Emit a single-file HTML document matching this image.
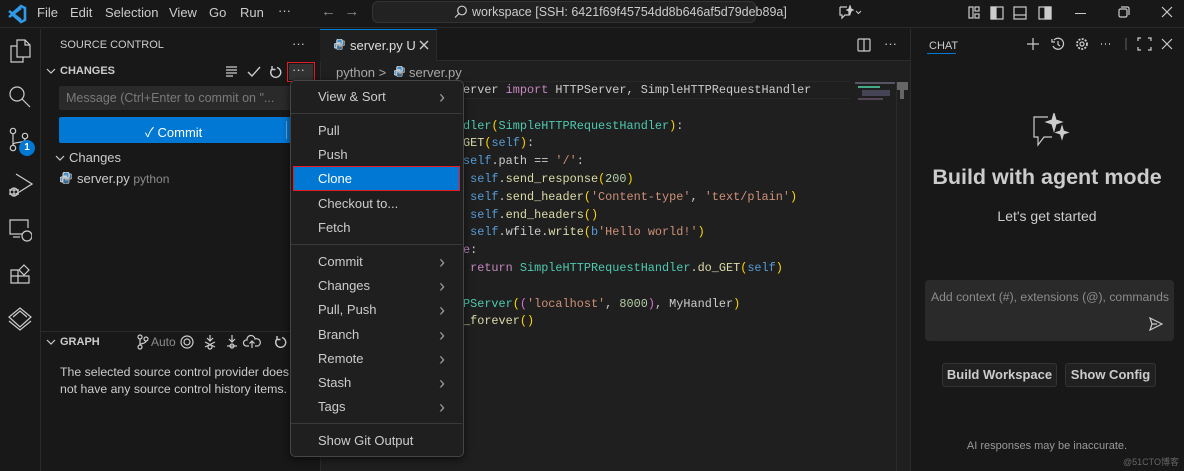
<!DOCTYPE html>
<html><head><meta charset="utf-8">
<style>
*{box-sizing:border-box;margin:0;padding:0}
body{width:1184px;height:471px;overflow:hidden;background:#181818;font-family:"Liberation Sans","Noto Sans CJK SC",sans-serif;color:#ccc;font-size:13px;position:relative}
.a{position:absolute}
.mono{font-family:"Liberation Mono",monospace;font-size:11.85px;white-space:pre}
svg{position:absolute;fill:none;stroke:#ccc;stroke-width:1.2}
.mi{position:absolute;left:318px;font-size:13px;color:#ccc}
.ch{position:absolute;left:439px;color:#999;font-size:18px;line-height:14px}
.sep{position:absolute;left:291px;width:171px;height:1px;background:#3a3a3a}
</style></head><body>
<!-- title bar -->
<div class="a" style="left:0;top:0;width:1184px;height:28px;background:#181818;border-bottom:1px solid #2b2b2b"></div>
<svg style="left:7px;top:4px" width="20" height="20" viewBox="0 0 20 20"><path d="M14 2 L18 4 V16 L14 18 L5 10 Z M2 7 L14 16 M2 13 L14 4" stroke="#2f9ae8" stroke-width="2.6"/></svg>
<div class="a" style="left:37px;top:5px;font-size:13px;color:#ccc">File</div>
<div class="a" style="left:70px;top:5px">Edit</div>
<div class="a" style="left:105px;top:5px">Selection</div>
<div class="a" style="left:169px;top:5px">View</div>
<div class="a" style="left:209px;top:5px">Go</div>
<div class="a" style="left:240px;top:5px">Run</div>
<div class="a" style="left:278px;top:3px">···</div>
<div class="a" style="left:321px;top:3px;color:#888;font-size:15px">←&nbsp;&nbsp;→</div>
<div class="a" style="left:372px;top:1px;width:384px;height:22px;background:#222;border:1px solid #333;border-radius:6px"></div>
<svg style="left:454px;top:5px" width="14" height="14" viewBox="0 0 14 14"><circle cx="8" cy="5.5" r="4.3"/><path d="M5 8.5 L1 12.5"/></svg>
<div class="a" style="left:472px;top:5px;font-size:12.5px;color:#ccc">workspace [SSH: 6421f69f45754dd8b646af5d79deb89a]</div>
<svg style="left:838px;top:5px" width="24" height="16" viewBox="0 0 24 16"><path d="M2 2H9 M2 2V10H4V13L7 10H11V6"/><path d="M12 1 L13 4 L15 5 L13 6 L12 9 L11 6 L9 5 L11 4Z" fill="#ccc"/><path d="M18 6L20.5 8.5L23 6" stroke-width="1"/></svg>
<svg style="left:968px;top:5px" width="90" height="16" viewBox="0 0 90 16"><rect x="1" y="2" width="4" height="11"/><rect x="7" y="2" width="4" height="4"/><rect x="7" y="9" width="4" height="4"/><rect x="23" y="2" width="12" height="12"/><rect x="23" y="2" width="5" height="12" fill="#ccc"/><rect x="46" y="2" width="12" height="12"/><path d="M46 10H58"/><rect x="71" y="2" width="12" height="12"/><rect x="77" y="2" width="6" height="12" fill="#ccc"/></svg>
<div class="a" style="left:1075px;top:13px;width:11px;height:1px;background:#ccc"></div>
<svg style="left:1118px;top:6px" width="12" height="12" viewBox="0 0 12 12"><rect x="1" y="3" width="8" height="8" rx="1.5"/><path d="M3 1H9.5A1.5 1.5 0 0 1 11 2.5V9"/></svg>
<svg style="left:1161px;top:6px" width="12" height="12" viewBox="0 0 12 12"><path d="M1 1L11 11M11 1L1 11"/></svg>

<!-- activity bar -->
<div class="a" style="left:0;top:29px;width:41px;height:442px;background:#181818;border-right:1px solid #2b2b2b"></div>
<svg style="left:8px;top:38px" width="24" height="26" viewBox="0 0 24 26" stroke="#858585" stroke-width="1.4"><path d="M9 2H17L22 7V19H9Z M17 2V7H22"/><path d="M9 8H3V24H15V19"/></svg>
<svg style="left:8px;top:85px" width="24" height="24" viewBox="0 0 24 24" stroke="#858585" stroke-width="1.4"><circle cx="9" cy="9" r="7"/><path d="M14 14L22 22"/></svg>
<svg style="left:9px;top:127px" width="22" height="26" viewBox="0 0 22 26" stroke="#ddd" stroke-width="1.5"><circle cx="4" cy="4" r="2.7"/><circle cx="4" cy="21" r="2.7"/><circle cx="16" cy="9" r="2.7"/><path d="M4 7V18 M16 12C16 17 4 14 4 18"/></svg>
<div class="a" style="left:19px;top:140px;width:16px;height:16px;border-radius:50%;background:#0078d4;color:#fff;font-size:10px;font-weight:bold;text-align:center;line-height:16px">1</div>
<svg style="left:7px;top:172px" width="26" height="26" viewBox="0 0 26 26" stroke="#858585" stroke-width="1.3"><path d="M9 2L25 12L9 22"/><circle cx="7" cy="20" r="4"/><path d="M2 18H12M2 22H12M7 16V24"/></svg>
<svg style="left:8px;top:218px" width="24" height="24" viewBox="0 0 24 24" stroke="#858585" stroke-width="1.3"><path d="M14 16H2V2H20V10"/><path d="M5 19H12"/><circle cx="19" cy="18" r="5"/></svg>
<svg style="left:9px;top:263px" width="22" height="22" viewBox="0 0 22 22" stroke="#858585" stroke-width="1.3"><path d="M2 7H9V20H2Z M9 13H20V20H9 M2 13H9"/><path d="M15 2L20 7L15 12L10 7Z"/></svg>
<svg style="left:7px;top:305px" width="26" height="26" viewBox="0 0 26 26" stroke="#858585" stroke-width="1.3"><path d="M13 3L24 12L13 22L2 12Z M6 12L13 6L20 12 M2 16L13 25L24 16"/></svg>

<!-- sidebar -->
<div class="a" style="left:60px;top:39px;font-size:11px;color:#ccc">SOURCE CONTROL</div>
<div class="a" style="left:292px;top:36px">···</div>
<svg style="left:46px;top:67px" width="10" height="8" viewBox="0 0 10 8"><path d="M1 2L5 6L9 2"/></svg>
<div class="a" style="left:60px;top:65px;font-size:11px;font-weight:bold;color:#ccc">CHANGES</div>
<svg style="left:225px;top:64px" width="62" height="16" viewBox="0 0 62 16"><path d="M1 3H12M1 6H12M1 9H12M1 12H8"/><path d="M23 8L27 12L35 3" stroke-width="1.4"/><path d="M52 3.5A5 5 0 1 1 47 5M47 2V5.5H50.5" stroke-width="1.4"/></svg>
<div class="a" style="left:287px;top:62px;width:28px;height:20px;border:1.5px solid #e51c23"></div>
<div class="a" style="left:289px;top:64px;width:24px;height:16px;background:#333"></div>
<div class="a" style="left:292px;top:62px">···</div>
<div class="a" style="left:59px;top:86px;width:232px;height:24px;background:#2a2a2a;border-radius:2px"></div>
<div class="a" style="left:66px;top:91px;color:#7a7a7a;font-size:12.5px">Message (Ctrl+Enter to commit on "...</div>
<div class="a" style="left:59px;top:117px;width:232px;height:26px;background:#0078d4;border-radius:2px"></div>
<div class="a" style="left:286px;top:121px;width:1px;height:18px;background:#6aa6d8"></div>
<div class="a" style="left:145px;top:122px;color:#fff;font-size:13px">✓ Commit</div>
<svg style="left:55px;top:154px" width="10" height="8" viewBox="0 0 10 8"><path d="M1 2L5 6L9 2"/></svg>
<div class="a" style="left:69px;top:150px">Changes</div>
<svg style="left:60px;top:172px" width="12" height="12" viewBox="0 0 12 12" stroke="none"><path d="M6 0C3 0 3 1.5 3 2.5V4H6.5V5H2C0 5 0 7 0 7.5C0 10 1.5 10 2.5 10V8C2.5 7 3 6.5 4 6.5H8C9 6.5 9 6 9 5V2C9 0.5 7.5 0 6 0Z" fill="#3d8fcf"/><path d="M6 12C9 12 9 10.5 9 9.5V8H5.5V7H10C12 7 12 5 12 4.5C12 2 10.5 2 9.5 2V4C9.5 5 9 5.5 8 5.5H4C3 5.5 3 6 3 7V10C3 11.5 4.5 12 6 12Z" fill="#3d8fcf" opacity=".7"/></svg>
<div class="a" style="left:77px;top:171px">server.py <span style="color:#8c8c8c;font-size:12px">python</span></div>
<div class="a" style="left:41px;top:331px;width:279px;height:1px;background:#2b2b2b"></div>
<svg style="left:46px;top:338px" width="10" height="8" viewBox="0 0 10 8"><path d="M1 2L5 6L9 2"/></svg>
<div class="a" style="left:60px;top:336px;font-size:11px;font-weight:bold">GRAPH</div>
<svg style="left:136px;top:334px" width="152" height="16" viewBox="0 0 152 16" stroke="#bbb"><circle cx="4" cy="3" r="2"/><circle cx="4" cy="13" r="2"/><circle cx="10" cy="5" r="2"/><path d="M4 5V11M10 7C10 10 4 9 4 11"/><circle cx="51" cy="8" r="6"/><circle cx="51" cy="8" r="3"/><path d="M74 1V7M71 4L74 7L77 4M69 8L79 13M79 8L69 13"/><circle cx="74" cy="13" r="2"/><path d="M96 1V8M93 5L96 8L99 5"/><circle cx="96" cy="12" r="2"/><path d="M91 12H101"/><path d="M113 12H110A3 3 0 0 1 111 6A4 4 0 0 1 119 5A3 3 0 0 1 122 12H119M116 14V7M113.5 9.5L116 7L118.5 9.5"/><path d="M146 3.5A5 5 0 1 1 141 5M141 2V5.5H144.5" stroke-width="1.4"/></svg>
<div class="a" style="left:151px;top:335px;color:#8c8c8c;font-size:12px">Auto</div>
<div class="a" style="left:60px;top:364px;line-height:17px;font-size:12.3px">The selected source control provider does<br>not have any source control history items.</div>

<!-- editor -->
<div class="a" style="left:320px;top:29px;width:590px;height:442px;background:#1f1f1f;border-left:1px solid #2b2b2b"></div>
<div class="a" style="left:320px;top:29px;width:590px;height:32px;background:#181818;border-bottom:1px solid #2b2b2b"></div>
<div class="a" style="left:320px;top:29px;width:117px;height:32px;background:#1f1f1f;border-top:1px solid #0078d4;border-right:1px solid #2b2b2b"></div>
<svg style="left:334px;top:39px" width="11" height="11" viewBox="0 0 12 12" stroke="none"><path d="M6 0C3 0 3 1.5 3 2.5V4H6.5V5H2C0 5 0 7 0 7.5C0 10 1.5 10 2.5 10V8C2.5 7 3 6.5 4 6.5H8C9 6.5 9 6 9 5V2C9 0.5 7.5 0 6 0Z" fill="#3d8fcf"/><path d="M6 12C9 12 9 10.5 9 9.5V8H5.5V7H10C12 7 12 5 12 4.5C12 2 10.5 2 9.5 2V4C9.5 5 9 5.5 8 5.5H4C3 5.5 3 6 3 7V10C3 11.5 4.5 12 6 12Z" fill="#3d8fcf" opacity=".7"/></svg>
<div class="a" style="left:350px;top:38px;color:#ddd">server.py U</div>
<svg style="left:419px;top:40px" width="10" height="10" viewBox="0 0 10 10"><path d="M1 1L9 9M9 1L1 9" stroke-width="1.4"/></svg>
<svg style="left:857px;top:38px" width="14" height="14" viewBox="0 0 14 14"><rect x="1" y="1" width="12" height="12" rx="1"/><path d="M7 1V13"/></svg>
<div class="a" style="left:884px;top:36px">···</div>
<div class="a" style="left:336px;top:65px;color:#aaa">python &gt;</div>
<svg style="left:394px;top:66px" width="11" height="11" viewBox="0 0 12 12" stroke="none"><path d="M6 0C3 0 3 1.5 3 2.5V4H6.5V5H2C0 5 0 7 0 7.5C0 10 1.5 10 2.5 10V8C2.5 7 3 6.5 4 6.5H8C9 6.5 9 6 9 5V2C9 0.5 7.5 0 6 0Z" fill="#3d8fcf"/><path d="M6 12C9 12 9 10.5 9 9.5V8H5.5V7H10C12 7 12 5 12 4.5C12 2 10.5 2 9.5 2V4C9.5 5 9 5.5 8 5.5H4C3 5.5 3 6 3 7V10C3 11.5 4.5 12 6 12Z" fill="#3d8fcf" opacity=".7"/></svg>
<div class="a" style="left:409px;top:65px;color:#aaa">server.py</div>
<div class="a" style="left:440px;top:81px;width:410px;height:18px;border-top:1px solid #282828;border-bottom:1px solid #282828"></div>
<div class="a mono" style="left:463px;top:82px;line-height:17.8px;color:#ccc"><span>erver </span><span style="color:#c586c0">import</span> HTTPServer, SimpleHTTPRequestHandler

<span style="color:#4ec9b0">dler</span><span style="color:#ffd700">(</span><span style="color:#4ec9b0">SimpleHTTPRequestHandler</span><span style="color:#ffd700">)</span>:
<span style="color:#dcdcaa">GET</span><span style="color:#ffd700">(</span><span style="color:#569cd6">self</span><span style="color:#ffd700">)</span>:
<span style="color:#569cd6">self</span>.path == <span style="color:#ce9178">'/'</span>:
 <span style="color:#569cd6">self</span>.<span style="color:#dcdcaa">send_response</span><span style="color:#ffd700">(</span><span style="color:#b5cea8">200</span><span style="color:#ffd700">)</span>
 <span style="color:#569cd6">self</span>.<span style="color:#dcdcaa">send_header</span><span style="color:#ffd700">(</span><span style="color:#ce9178">'Content-type'</span>, <span style="color:#ce9178">'text/plain'</span><span style="color:#ffd700">)</span>
 <span style="color:#569cd6">self</span>.<span style="color:#dcdcaa">end_headers</span><span style="color:#ffd700">()</span>
 <span style="color:#569cd6">self</span>.wfile.<span style="color:#dcdcaa">write</span><span style="color:#ffd700">(</span><span style="color:#569cd6">b</span><span style="color:#ce9178">'Hello world!'</span><span style="color:#ffd700">)</span>
<span style="color:#c586c0">e</span>:
 <span style="color:#c586c0">return</span> <span style="color:#4ec9b0">SimpleHTTPRequestHandler</span>.<span style="color:#dcdcaa">do_GET</span><span style="color:#ffd700">(</span><span style="color:#569cd6">self</span><span style="color:#ffd700">)</span>

<span style="color:#4ec9b0">PServer</span><span style="color:#ffd700">(</span><span style="color:#da70d6">(</span><span style="color:#ce9178">'localhost'</span>, <span style="color:#b5cea8">8000</span><span style="color:#da70d6">)</span>, MyHandler<span style="color:#ffd700">)</span>
<span style="color:#dcdcaa">_forever</span><span style="color:#ffd700">()</span></div>
<!-- minimap -->
<div class="a" style="left:855px;top:82px;width:40px;height:2px;background:#556"></div>
<div class="a" style="left:858px;top:86px;width:22px;height:2px;background:#4a8"></div>
<div class="a" style="left:862px;top:90px;width:28px;height:6px;background:#445"></div>
<div class="a" style="left:858px;top:98px;width:25px;height:2px;background:#545"></div>
<div class="a" style="left:896px;top:82px;width:12px;height:8px;background:#666"></div>
<div class="a" style="left:900px;top:82px;width:4px;height:17px;background:#666"></div>
<div class="a" style="left:896px;top:82px;width:1px;height:389px;background:#2b2b2b"></div>

<!-- chat -->
<div class="a" style="left:910px;top:29px;width:274px;height:442px;background:#181818;border-left:1px solid #2b2b2b"></div>
<div class="a" style="left:929px;top:40px;font-size:11px;color:#ccc">CHAT</div>
<div class="a" style="left:927px;top:53px;width:29px;height:1px;background:#0078d4"></div>
<svg style="left:1026px;top:37px" width="150" height="14" viewBox="0 0 150 14"><path d="M7 1V13M1 7H13"/><path d="M28 3A5.5 5.5 0 1 1 27 9M26 2V5H29M32 4V7.5L34 9"/><circle cx="56" cy="7" r="2"/><circle cx="56" cy="7" r="5" stroke-dasharray="2 1.3" stroke-width="1.8"/><path d="M75 7h1M79 7h1M83 7h1" stroke-width="1.6"/><path d="M100 1V13" stroke="#555"/><path d="M112 4V1H115M122 1H125V4M125 10V13H122M115 13H112V10"/><path d="M136 2L146 12M146 2L136 12"/></svg>
<svg style="left:1032px;top:113px" width="38" height="36" viewBox="0 0 38 36" stroke="#ccc" stroke-width="2"><path d="M16 4H2V24H6V32L12 24H20"/><path d="M22 0L24 7L30 9L24 11L22 18L20 11L14 9L20 7Z" fill="#ccc" stroke-width="1"/><path d="M30 13L31.5 18L36 19.5L31.5 21L30 26L28.5 21L24 19.5L28.5 18Z" fill="#ccc" stroke-width="1"/></svg>
<div class="a" style="left:910px;top:165px;width:274px;text-align:center;font-size:21.5px;font-weight:bold;color:#ccc">Build with agent mode</div>
<div class="a" style="left:910px;top:208px;width:274px;text-align:center;font-size:14px;color:#ccc">Let's get started</div>
<div class="a" style="left:925px;top:280px;width:249px;height:61px;background:#2a2a2a;border-radius:4px"></div>
<div class="a" style="left:931px;top:290px;color:#8c8c8c;font-size:12.2px">Add context (#), extensions (@), commands</div>
<svg style="left:1149px;top:317px" width="14" height="14" viewBox="0 0 14 14"><path d="M1 1L13 7L1 13L3 7Z M3 7H8"/></svg>
<div class="a" style="left:942px;top:363px;width:115px;height:24px;background:#202020;border:1px solid #333;border-radius:3px;text-align:center;line-height:22px;font-weight:bold;font-size:13px">Build Workspace</div>
<div class="a" style="left:1065px;top:363px;width:91px;height:24px;background:#202020;border:1px solid #333;border-radius:3px;text-align:center;line-height:22px;font-weight:bold;font-size:13px">Show Config</div>
<div class="a" style="left:910px;top:440px;width:274px;text-align:center;font-size:11px;color:#999">AI responses may be inaccurate.</div>
<div class="a" style="left:1123px;top:455px;font-size:9px;color:#666">@51CTO博客</div>

<!-- context menu -->
<div class="a" style="left:290px;top:80px;width:174px;height:377px;background:#1f1f1f;border:1px solid #454545;border-radius:5px;box-shadow:0 2px 8px rgba(0,0,0,.6)"></div>
<div class="mi" style="top:89px">View &amp; Sort</div><div class="ch" style="top:90px">›</div>
<div class="sep" style="top:113px"></div>
<div class="mi" style="top:123px">Pull</div>
<div class="mi" style="top:147px">Push</div>
<div class="a" style="left:293px;top:166px;width:167px;height:25px;background:#0078d4;border:1.5px solid #e51c23"></div>
<div class="mi" style="top:171px;color:#fff">Clone</div>
<div class="mi" style="top:196px">Checkout to...</div>
<div class="mi" style="top:220px">Fetch</div>
<div class="sep" style="top:244px"></div>
<div class="mi" style="top:254px">Commit</div><div class="ch" style="top:255px">›</div>
<div class="mi" style="top:278px">Changes</div><div class="ch" style="top:279px">›</div>
<div class="mi" style="top:302px">Pull, Push</div><div class="ch" style="top:303px">›</div>
<div class="mi" style="top:327px">Branch</div><div class="ch" style="top:328px">›</div>
<div class="mi" style="top:351px">Remote</div><div class="ch" style="top:352px">›</div>
<div class="mi" style="top:375px">Stash</div><div class="ch" style="top:376px">›</div>
<div class="mi" style="top:399px">Tags</div><div class="ch" style="top:400px">›</div>
<div class="sep" style="top:423px"></div>
<div class="mi" style="top:433px">Show Git Output</div>
</body></html>
